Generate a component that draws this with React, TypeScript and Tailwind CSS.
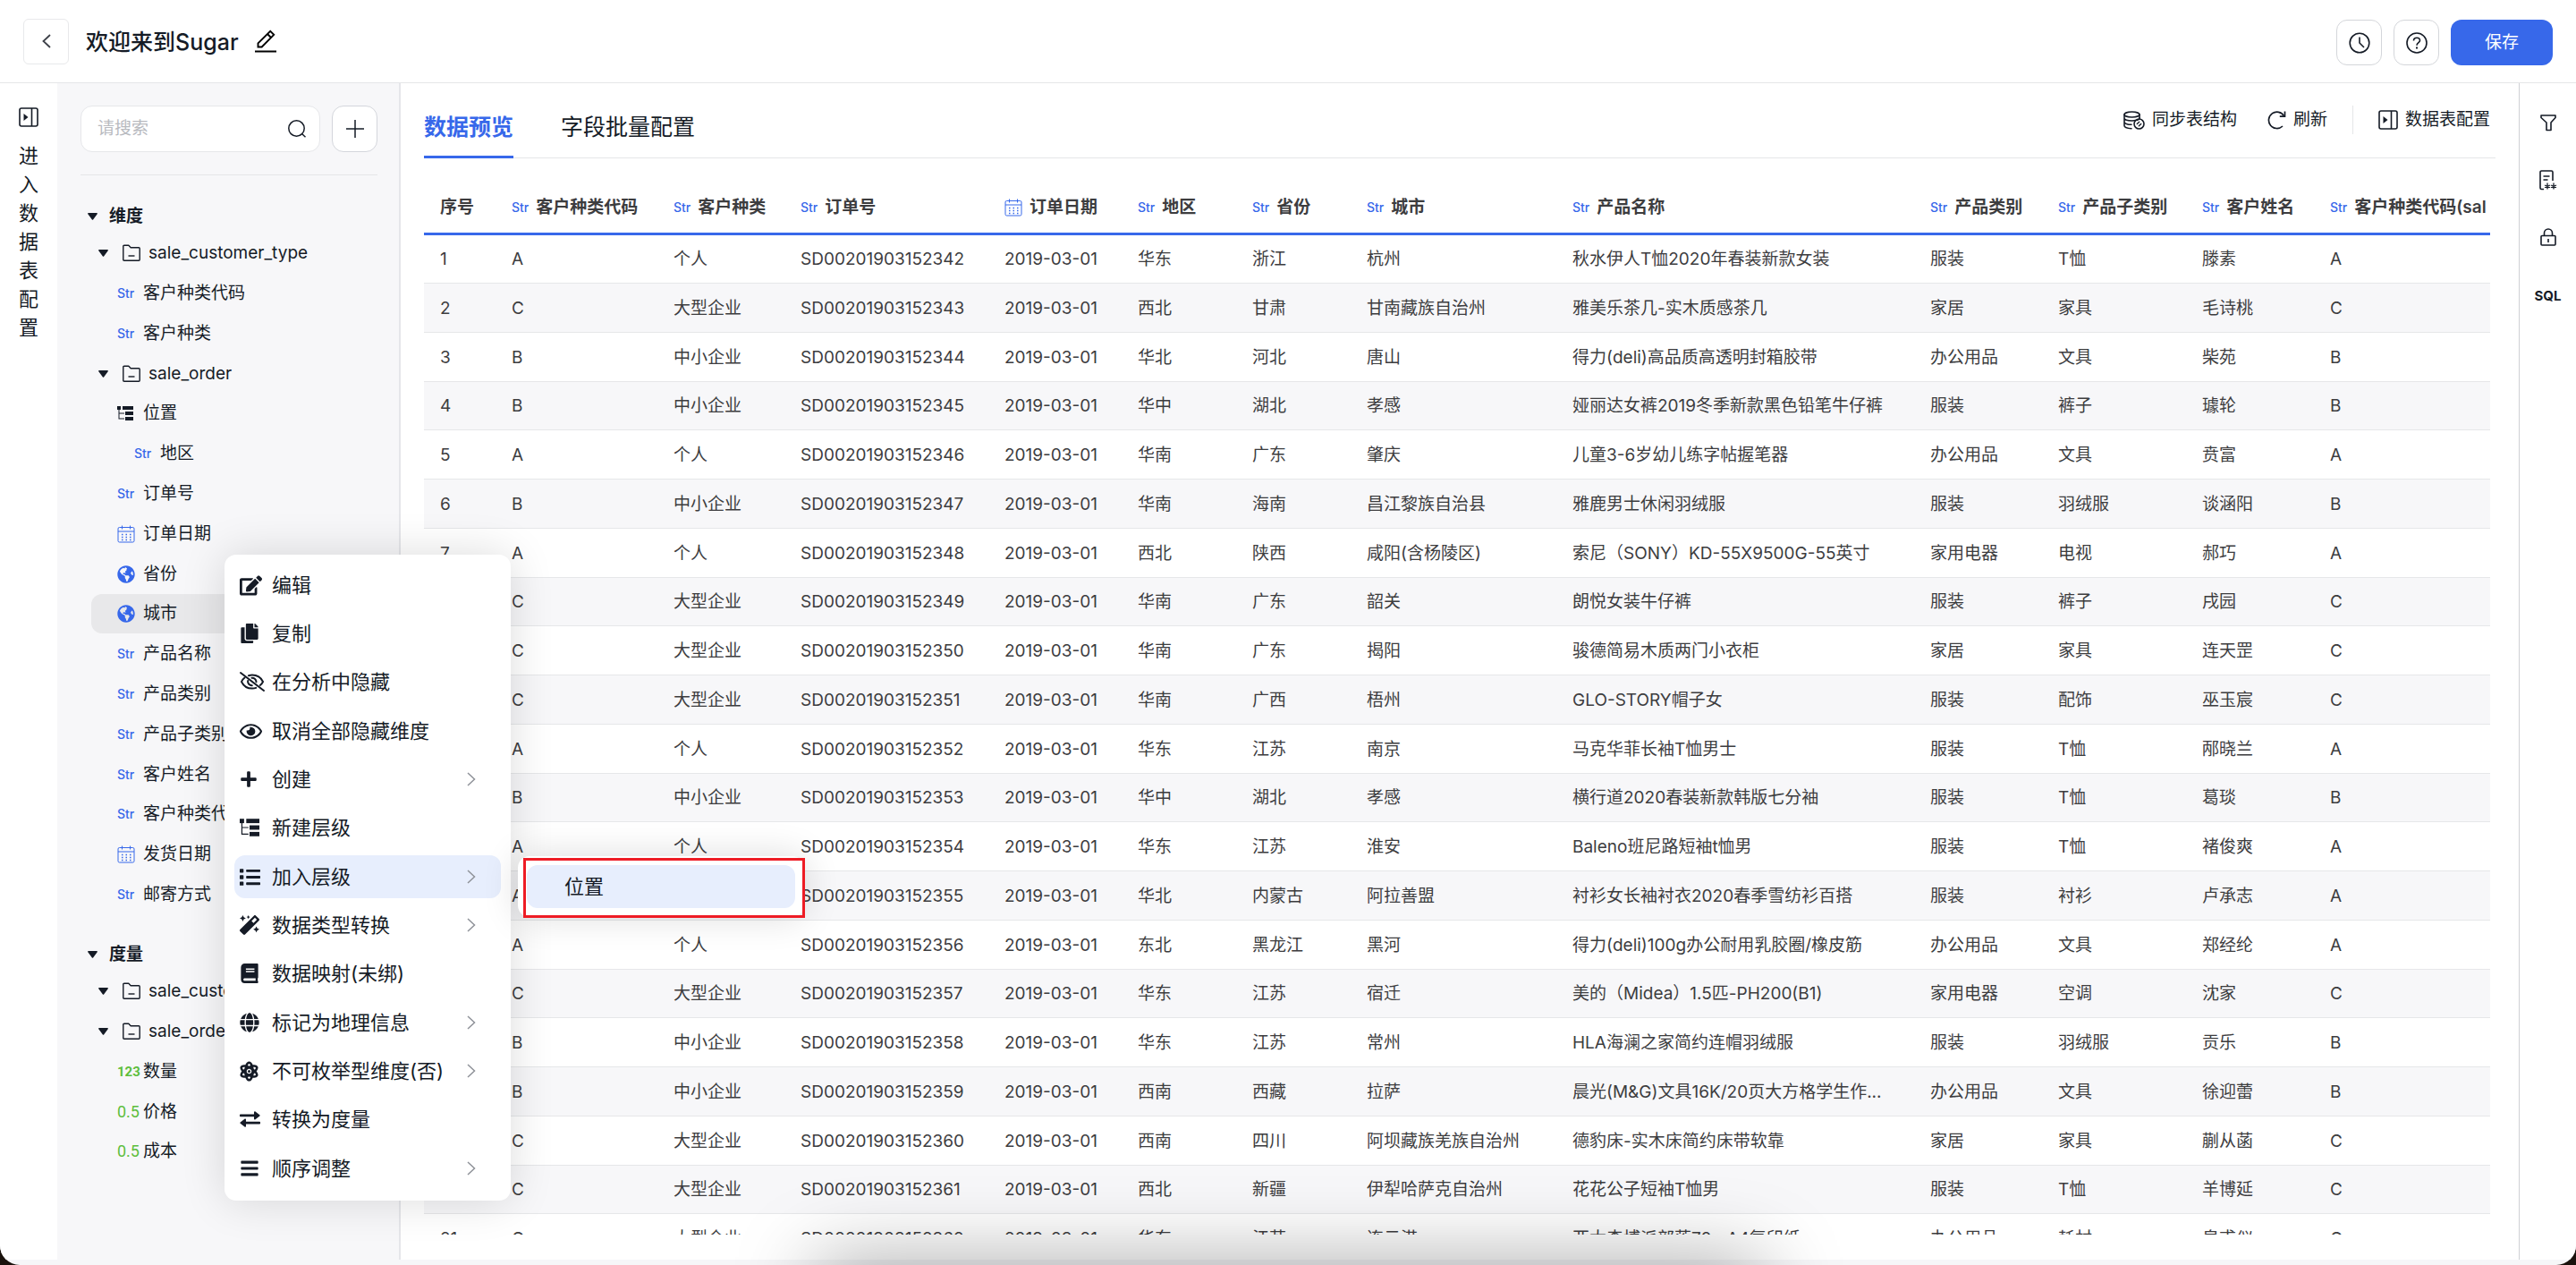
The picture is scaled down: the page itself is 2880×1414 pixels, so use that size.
import type { ReactNode } from 'react';
import {
  FaBars,
  FaBook,
  FaCopy,
  FaEdit,
  FaGlobe,
  FaGlobeAmericas,
  FaList,
  FaMagic,
  FaPlus,
  FaRegEye,
} from 'react-icons/fa';

type FieldType = 'str' | 'date' | 'geo' | 'level' | 'int' | 'float' | 'folder';

interface TreeNode {
  label: string;
  type: FieldType;
  nested?: boolean;
  active?: boolean;
}

const dimensions: TreeNode[] = [
  { label: 'sale_customer_type', type: 'folder' },
  { label: '客户种类代码', type: 'str' },
  { label: '客户种类', type: 'str' },
  { label: 'sale_order', type: 'folder' },
  { label: '位置', type: 'level' },
  { label: '地区', type: 'str', nested: true },
  { label: '订单号', type: 'str' },
  { label: '订单日期', type: 'date' },
  { label: '省份', type: 'geo' },
  { label: '城市', type: 'geo', active: true },
  { label: '产品名称', type: 'str' },
  { label: '产品类别', type: 'str' },
  { label: '产品子类别', type: 'str' },
  { label: '客户姓名', type: 'str' },
  { label: '客户种类代码', type: 'str' },
  { label: '发货日期', type: 'date' },
  { label: '邮寄方式', type: 'str' },
];

const measures: TreeNode[] = [
  { label: 'sale_customer_type', type: 'folder' },
  { label: 'sale_order', type: 'folder' },
  { label: '数量', type: 'int' },
  { label: '价格', type: 'float' },
  { label: '成本', type: 'float' },
];

const columns: { label: string; type?: FieldType; width: string }[] = [
  { label: '序号', width: 'w-20' },
  { label: '客户种类代码', type: 'str', width: 'w-[181px]' },
  { label: '客户种类', type: 'str', width: 'w-[142px]' },
  { label: '订单号', type: 'str', width: 'w-[228px]' },
  { label: '订单日期', type: 'date', width: 'w-[149px]' },
  { label: '地区', type: 'str', width: 'w-32' },
  { label: '省份', type: 'str', width: 'w-32' },
  { label: '城市', type: 'str', width: 'w-[230px]' },
  { label: '产品名称', type: 'str', width: 'w-[400px]' },
  { label: '产品类别', type: 'str', width: 'w-[143px]' },
  { label: '产品子类别', type: 'str', width: 'w-[161px]' },
  { label: '客户姓名', type: 'str', width: 'w-[143px]' },
  { label: '客户种类代码(sal', type: 'str', width: 'w-auto' },
];

const kinds: Record<string, string> = {
  A: '个人',
  B: '中小企业',
  C: '大型企业',
};

// kind, region, province, city, product, category, sub category, customer
const orders = [
  ['A', '华东', '浙江', '杭州', '秋水伊人T恤2020年春装新款女装', '服装', 'T恤', '滕素'],
  ['C', '西北', '甘肃', '甘南藏族自治州', '雅美乐茶几-实木质感茶几', '家居', '家具', '毛诗桃'],
  ['B', '华北', '河北', '唐山', '得力(deli)高品质高透明封箱胶带', '办公用品', '文具', '柴苑'],
  ['B', '华中', '湖北', '孝感', '娅丽达女裤2019冬季新款黑色铅笔牛仔裤', '服装', '裤子', '璩轮'],
  ['A', '华南', '广东', '肇庆', '儿童3-6岁幼儿练字帖握笔器', '办公用品', '文具', '贲富'],
  ['B', '华南', '海南', '昌江黎族自治县', '雅鹿男士休闲羽绒服', '服装', '羽绒服', '谈涵阳'],
  ['A', '西北', '陕西', '咸阳(含杨陵区)', '索尼（SONY）KD-55X9500G-55英寸', '家用电器', '电视', '郝巧'],
  ['C', '华南', '广东', '韶关', '朗悦女装牛仔裤', '服装', '裤子', '戌园'],
  ['C', '华南', '广东', '揭阳', '骏德简易木质两门小衣柜', '家居', '家具', '连天罡'],
  ['C', '华南', '广西', '梧州', 'GLO-STORY帽子女', '服装', '配饰', '巫玉宸'],
  ['A', '华东', '江苏', '南京', '马克华菲长袖T恤男士', '服装', 'T恤', '邴晓兰'],
  ['B', '华中', '湖北', '孝感', '横行道2020春装新款韩版七分袖', '服装', 'T恤', '葛琰'],
  ['A', '华东', '江苏', '淮安', 'Baleno班尼路短袖t恤男', '服装', 'T恤', '褚俊爽'],
  ['A', '华北', '内蒙古', '阿拉善盟', '衬衫女长袖衬衣2020春季雪纺衫百搭', '服装', '衬衫', '卢承志'],
  ['A', '东北', '黑龙江', '黑河', '得力(deli)100g办公耐用乳胶圈/橡皮筋', '办公用品', '文具', '郑经纶'],
  ['C', '华东', '江苏', '宿迁', '美的（Midea）1.5匹-PH200(B1)', '家用电器', '空调', '沈家'],
  ['B', '华东', '江苏', '常州', 'HLA海澜之家简约连帽羽绒服', '服装', '羽绒服', '贡乐'],
  ['B', '西南', '西藏', '拉萨', '晨光(M&G)文具16K/20页大方格学生作...', '办公用品', '文具', '徐迎蕾'],
  ['C', '西南', '四川', '阿坝藏族羌族自治州', '德豹床-实木床简约床带软靠', '家居', '家具', '蒯从菡'],
  ['C', '西北', '新疆', '伊犁哈萨克自治州', '花花公子短袖T恤男', '服装', 'T恤', '羊博延'],
  ['C', '华东', '江苏', '连云港', '亚太森博派部落70g A4复印纸', '办公用品', '耗材', '皇甫仪'],
];

const menuItems: {
  label: string;
  icon: ReactNode;
  sub?: boolean;
  active?: boolean;
}[] = [
  { label: '编辑', icon: <FaEdit size={25} /> },
  { label: '复制', icon: <FaCopy size={22} /> },
  { label: '在分析中隐藏', icon: <EyeOffIcon /> },
  { label: '取消全部隐藏维度', icon: <FaRegEye size={25} /> },
  { label: '创建', icon: <FaPlus size={20} />, sub: true },
  { label: '新建层级', icon: <LevelIcon size={22} /> },
  { label: '加入层级', icon: <FaList size={23} />, sub: true, active: true },
  { label: '数据类型转换', icon: <FaMagic size={22} />, sub: true },
  { label: '数据映射(未绑)', icon: <FaBook size={22} /> },
  { label: '标记为地理信息', icon: <FaGlobe size={22} />, sub: true },
  { label: '不可枚举型维度(否)', icon: <AtomIcon />, sub: true },
  { label: '转换为度量', icon: <SwapIcon /> },
  { label: '顺序调整', icon: <FaBars size={22} />, sub: true },
];

function EyeOffIcon() {
  return (
    <svg width="28" height="24" viewBox="0 0 28 24" fill="none" stroke="currentColor" strokeWidth="2" strokeLinecap="round">
      <path d="M1 2l26 20" />
      <path d="M5.500 7.500C3.800 8.800 2.600 10.400 2 12c2.200 4.600 6.800 7.600 12 7.600 1.500 0 2.900-.2 4.200-.7" />
      <path d="M10 5.200c1.300-.4 2.600-.6 4-.6 5.200 0 9.800 3 12 7.400-.7 1.500-1.800 2.900-3.200 4" />
      <path d="M9.200 11c-.5 3 1.800 5.300 4.600 5.200M13.500 7.800c2.800-.2 5 1.900 5 4.500" />
    </svg>
  );
}

function LevelIcon({ size = 18 }: { size?: number }) {
  return (
    <svg width={size} height={size} viewBox="0 0 18 18" fill="currentColor">
      <rect x="0" y="1" width="4" height="4" />
      <rect x="6" y="1" width="12" height="4" />
      <rect x="9" y="7" width="9" height="4" />
      <rect x="9" y="13" width="9" height="4" />
      <path d="M1.500 4v11.500H8V14.500H2.500V9.500H8V8.500H2.500V4z" />
    </svg>
  );
}

function AtomIcon() {
  return (
    <svg width="21" height="23" viewBox="0 0 21 23" fill="none" stroke="currentColor" strokeWidth="2.600">
      <ellipse cx="10.500" cy="11.500" rx="4" ry="9.800" />
      <ellipse cx="10.500" cy="11.500" rx="4" ry="9.800" transform="rotate(60 10.500 11.500)" />
      <ellipse cx="10.500" cy="11.500" rx="4" ry="9.800" transform="rotate(120 10.500 11.500)" />
      <circle cx="10.500" cy="11.500" r="1.500" fill="currentColor" stroke="none" />
    </svg>
  );
}

function SwapIcon() {
  return (
    <svg width="23" height="18" viewBox="0 0 23 18" fill="currentColor">
      <path d="M.8 3.500H16V1.300c0-1 .9-1.300 1.500-.8l4.800 3.700c.5.400.5 1 0 1.400l-4.800 3.600c-.6.500-1.500.1-1.500-.8V6.300H.8C.3 6.300 0 6 0 5.500V4.300c0-.5.300-.8.800-.8z" />
      <path d="M22.200 14.500H7v2.200c0 1-.9 1.300-1.500.8L.7 13.800c-.5-.4-.5-1 0-1.400l4.800-3.600c.6-.5 1.500-.1 1.500.8v2.100h15.200c.5 0 .8.300.8.800v1.200c0 .5-.3.800-.8.800z" />
    </svg>
  );
}

function CalendarIcon() {
  return (
    <svg width="20" height="20" viewBox="0 0 20 20" fill="none" stroke="currentColor" strokeWidth="1">
      <rect x="1" y="2.500" width="18" height="16.500" rx="1.500" />
      <path d="M1 7h18M5.500 0.500v4M14.500 0.500v4" />
      <path d="M5 10.500h10.500M5 13.500h10.500M5 16.500h10.500" strokeWidth="1.500" strokeDasharray="1.500 3" />
    </svg>
  );
}

function FolderIcon() {
  return (
    <svg width="20" height="20" viewBox="0 0 20 20" fill="none" stroke="currentColor" strokeWidth="1.400" strokeLinejoin="round">
      <path d="M.8 17.200V2.200c0-.6.4-1 1-1h5l2.400 2.600h9c.6 0 1 .4 1 1v12.400c0 .6-.4 1-1 1H1.800c-.6 0-1-.4-1-1z" />
      <path d="M6.500 13h7" />
    </svg>
  );
}

function PanelIcon() {
  return (
    <svg width="22" height="22" viewBox="0 0 22 22" fill="none" stroke="currentColor" strokeWidth="1.600">
      <rect x="1" y="1" width="20" height="20" rx="2" />
      <path d="M14.500 1v20" />
      <path d="M5.500 7l5 4-5 4z" fill="currentColor" stroke="none" />
    </svg>
  );
}

function PencilIcon() {
  return (
    <svg width="24" height="26" viewBox="0 0 24 26" fill="none" stroke="#000" strokeWidth="1.900">
      <path d="M0 24.500h24" strokeWidth="2" />
      <path d="M3.500 19.500v-4.200L17.200 1.800l4 4L7.700 19.500zM14 5l4 4" />
    </svg>
  );
}

function SyncTableIcon() {
  return (
    <svg width="24" height="21" viewBox="0 0 24 21" fill="none" stroke="currentColor" strokeWidth="1.600" strokeLinecap="round">
      <ellipse cx="9.500" cy="4" rx="8.500" ry="3" />
      <path d="M1 4v12.500c0 1.600 3.500 3 8 3.200M18 4v4M1 8c0 1.700 3.800 3 8.500 3 1.700 0 3-.1 4-.4M1 12.300c0 1.600 3.500 3 8 3" />
      <path d="M18 8c0 1-1.500 2-3 2.400" />
      <circle cx="17.500" cy="14.500" r="5.500" />
      <path d="M15.300 14.500l2.400-2.200M17.300 16.700l2.400-2.200" strokeWidth="1.400" />
    </svg>
  );
}

function RefreshIcon() {
  return (
    <svg width="21" height="22" viewBox="0 0 21 22" fill="none" stroke="currentColor" strokeWidth="1.700">
      <path d="M17 18A9.200 9.200 0 1 1 18.500 6.500" />
      <path d="M19.500 1.500v5.700h-5.700" />
    </svg>
  );
}

function TypeTag({ type }: { type: FieldType }) {
  switch (type) {
    case 'str':
      return <span className="text-sm font-medium text-[#3768ea]">Str</span>;
    case 'date':
      return <span className="text-[#3768ea]"><CalendarIcon /></span>;
    case 'geo':
      return <FaGlobeAmericas size={20} className="text-[#3768ea]" />;
    case 'level':
      return <LevelIcon />;
    case 'int':
      return <span className="font-[family-name:Roboto] text-[15px] font-bold text-[#5dbe3c]">123</span>;
    case 'float':
      return <span className="font-[family-name:Roboto] text-lg text-[#5dbe3c]">0.5</span>;
    default:
      return <FolderIcon />;
  }
}

function Caret() {
  return (
    <svg width="11" height="8" viewBox="0 0 11 8" fill="currentColor" className="shrink-0">
      <path d="M.8 0h9.400c.6 0 .9.700.5 1.200L6.100 7.500c-.3.400-.9.400-1.200 0L.3 1.200C-.1.700.200 0 .8 0z" />
    </svg>
  );
}

function TreeGroup({ title, nodes }: { title: string; nodes: TreeNode[] }) {
  return (
    <section className="pb-[26px]">
      <h3 className="flex h-[37px] items-center gap-[13px] pl-2 font-semibold">
        <Caret />
        {title}
      </h3>
      <ul className="pl-3">
        {nodes.map((node, i) => (
          <li
            key={i}
            className={`flex h-[45px] items-center whitespace-nowrap rounded-xl nth-[5n]:h-[44px] ${
              node.active ? 'bg-[#e8e8ea]' : ''
            } ${node.type === 'folder' ? 'pl-2' : node.nested ? 'pl-12' : 'pl-[29px]'}`}
          >
            {node.type === 'folder' && (
              <span className="w-[27px]">
                <Caret />
              </span>
            )}
            <span className="flex w-[29px] shrink-0 items-center">
              <TypeTag type={node.type} />
            </span>
            {node.label}
          </li>
        ))}
      </ul>
    </section>
  );
}

function Sidebar() {
  return (
    <aside className="w-96 shrink-0 overflow-hidden border-r-2 border-[#e5e6ea] bg-[#f7f7f9] px-6 pl-[26px] pt-[25px]">
      <div className="flex gap-[13px] border-b border-[#e5e6e8] pb-[25px]">
        <label className="flex h-[52px] min-w-0 flex-1 items-center rounded-[13px] border border-[#e6e7ea] bg-white pl-[18px] pr-[15px]">
          <input
            type="text"
            aria-label="请搜索"
            placeholder="请搜索"
            className="min-w-0 flex-1 bg-transparent outline-none placeholder:text-[#b8babf]"
          />
          <svg width="20" height="20" viewBox="0 0 20 20" fill="none" stroke="currentColor" strokeWidth="1.500">
            <circle cx="9.500" cy="9.500" r="8.700" />
            <path d="M15.800 15.800l3.700 3.500" />
          </svg>
        </label>
        <button aria-label="新建" className="flex h-[52px] w-[51px] items-center justify-center rounded-[13px] border border-[#d4d6dc] bg-white">
          <svg width="20" height="20" viewBox="0 0 20 20" stroke="currentColor" strokeWidth="1.500">
            <path d="M10 0v20M0 10h20" />
          </svg>
        </button>
      </div>
      <div className="pt-[27px]">
        <TreeGroup title="维度" nodes={dimensions} />
        <TreeGroup title="度量" nodes={measures} />
      </div>
    </aside>
  );
}

function PreviewTable() {
  return (
    <table className="w-full table-fixed border-collapse text-left text-[#3d3d3f]">
      <colgroup>
        {columns.map((col) => (
          <col key={col.label} className={col.width} />
        ))}
      </colgroup>
      <thead>
        <tr className="h-[60px] border-b-3 border-[#3768ea]">
          {columns.map((col) => (
            <th key={col.label} className="p-0 pl-[18px] pt-1 font-semibold">
              <div className="flex items-center gap-2 whitespace-nowrap">
                {col.type && <TypeTag type={col.type} />}
                {col.label}
              </div>
            </th>
          ))}
        </tr>
      </thead>
      <tbody>
        {orders.map(([kind, region, province, city, ...rest], i) => {
          const cells = [
            i + 1,
            kind,
            kinds[kind],
            `SD00201903152${342 + i}`,
            '2019-03-01',
            region,
            province,
            city,
            ...rest,
            kind,
          ];
          return (
            <tr key={i} className="h-[55px] border-b border-[#e6e7e9] even:bg-[#f7f7f9] nth-[4n]:h-[54px]">
              {cells.map((cell, j) => (
                <td key={j} className="whitespace-nowrap p-0 pl-[18px] pt-0.5">
                  {cell}
                </td>
              ))}
            </tr>
          );
        })}
      </tbody>
    </table>
  );
}

function ContextMenu() {
  return (
    <div className="absolute left-[251px] top-[620px] z-10 w-80 rounded-[13px] bg-white px-[11px] pb-1.5 pt-[10px] text-[22px] shadow-[0_0_50px_rgba(0,0,0,0.14)]">
      {menuItems.map((item) => (
        <button
          key={item.label}
          className={`mb-1.5 flex h-12 w-full items-center whitespace-nowrap rounded-xl pl-1.5 pr-7 text-left nth-[3n]:mb-[7px] ${
            item.active ? 'bg-[#e7eefd]' : ''
          }`}
        >
          <span className="flex w-9 shrink-0 items-center">{item.icon}</span>
          <span className="flex-1">{item.label}</span>
          {item.sub && (
            <svg width="10" height="16" viewBox="0 0 10 16" fill="none" stroke="#8f9299" strokeWidth="1.500">
              <path d="M1 1l7.500 7L1 15" />
            </svg>
          )}
        </button>
      ))}
    </div>
  );
}

function SubMenu() {
  return (
    <div className="absolute left-[579px] top-[957px] z-10 w-80 rounded-[13px] bg-white px-[10px] py-[10px] text-[22px] shadow-[0_0_40px_rgba(0,0,0,0.14)]">
      <button className="block h-12 w-full rounded-xl bg-[#e7eefd] pl-[42px] text-left">位置</button>
      <div className="absolute -bottom-px -right-px left-1.5 top-0.5 border-3 border-[#ee1c25]" />
    </div>
  );
}

export default function App() {
  return (
    <div className="h-screen bg-[#1a120d]">
      <div className="relative flex h-full flex-col overflow-hidden rounded-b-[22px] bg-[#f6f6f8] pb-1.5 font-[Inter,'Noto_Sans_CJK_SC',sans-serif] text-[19px] leading-7 text-[#151b26]">
        <header className="flex h-[93px] shrink-0 items-center border-b border-[#e5e6e8] bg-white px-[26px]">
          <button aria-label="返回" className="mr-[19px] flex size-[51px] items-center justify-center rounded-md border border-[#e8e9eb]">
            <svg width="10" height="16" viewBox="0 0 10 16" fill="none" stroke="#3d4048" strokeWidth="1.800">
              <path d="M9 1L1.500 8 9 15" />
            </svg>
          </button>
          <h1 className="pt-0.5 text-[25px] font-medium">欢迎来到Sugar</h1>
          <button aria-label="重命名" className="ml-[18px]">
            <PencilIcon />
          </button>
          <div className="ml-auto flex gap-[13px] pt-[3px]">
            <button aria-label="历史" className="flex size-[51px] items-center justify-center rounded-xl border border-[#d4d6da]">
              <svg width="24" height="24" viewBox="0 0 24 24" fill="none" stroke="currentColor" strokeWidth="1.600">
                <circle cx="12" cy="12" r="10.800" />
                <path d="M12 5.500V12l5 5" />
              </svg>
            </button>
            <button aria-label="帮助" className="flex size-[51px] items-center justify-center rounded-xl border border-[#d4d6da]">
              <svg width="24" height="24" viewBox="0 0 24 24" fill="none" stroke="currentColor" strokeWidth="1.600">
                <circle cx="12" cy="12" r="11" />
                <path d="M8.500 9.500c0-2 1.500-3.300 3.500-3.300s3.500 1.300 3.500 3.100c0 2.300-3.500 2.500-3.500 5.500" />
                <path d="M12 16.500v2" strokeWidth="2" />
              </svg>
            </button>
            <button className="h-[51px] w-[114px] rounded-xl bg-[#3768ea] text-white">保存</button>
          </div>
        </header>

        <div className="flex min-h-0 flex-1 bg-white">
          <button className="flex w-16 shrink-0 flex-col items-center pt-[27px] text-[22px] leading-8">
            <PanelIcon />
            <span className="mt-4 w-[22px] whitespace-normal break-all">进入数据表配置</span>
          </button>

          <Sidebar />

          <main className="flex min-w-0 flex-1 flex-col px-[26px]">
            <div className="flex h-[84px] shrink-0 justify-between border-b border-[#e5e6e8]">
              <nav className="-mb-px flex gap-[53px] text-[25px]">
                <button className="border-b-3 border-[#3768ea] pt-4 font-semibold text-[#3768ea]">
                  数据预览
                </button>
                <button className="border-b-3 border-transparent pt-4">字段批量配置</button>
              </nav>
              <div className="mt-[25px] flex h-8 items-center pr-[6px]">
                <button className="flex items-center gap-2">
                  <SyncTableIcon />
                  同步表结构
                </button>
                <button className="ml-[34px] flex items-center gap-2">
                  <RefreshIcon />
                  刷新
                </button>
                <span className="mx-7 h-8 w-px bg-[#e5e6e8]" />
                <button className="flex items-center gap-2">
                  <PanelIcon />
                  数据表配置
                </button>
              </div>
            </div>
            <div className="mb-7 mr-[6px] min-h-0 flex-1 overflow-hidden pt-6">
              <PreviewTable />
            </div>
          </main>

          <aside className="flex w-16 shrink-0 flex-col items-center border-l border-[#cfd1d5] pt-8">
            <button aria-label="筛选" className="flex h-6 items-center">
              <svg width="18" height="19" viewBox="0 0 18 19" fill="none" stroke="currentColor" strokeWidth="1.600" strokeLinejoin="round">
                <path d="M1 1h16v2.500L12 9v8.500H7V9L1 3.500z" />
              </svg>
            </button>
            <button aria-label="脱敏" className="mt-10 flex h-6 items-center">
              <svg width="20" height="23" viewBox="0 0 20 23" fill="none" stroke="currentColor" strokeWidth="1.600">
                <path d="M5 21.500H2.500c-.8 0-1.500-.6-1.500-1.500V2.500C1 1.600 1.600 1 2.500 1h11c.9 0 1.500.6 1.500 1.500V12" />
                <path d="M4.500 7h7M4.500 11h5" />
                <path d="M9 14.500v7M6 17l6 2.500M12 17l-6 2.500M16 14.500v7M13 17l6 2.500M19 17l-6 2.500" strokeWidth="1.300" />
              </svg>
            </button>
            <button aria-label="权限" className="mt-10 flex h-6 items-center">
              <svg width="18" height="20" viewBox="0 0 18 20" fill="none" stroke="currentColor" strokeWidth="1.600">
                <rect x="1" y="8.500" width="16" height="10.500" rx="1" />
                <path d="M4.500 8.500V5.500a4.500 4.500 0 0 1 9 0v3M9 12v4" />
              </svg>
            </button>
            <button className="mt-[42px] h-6 text-[15px] leading-6 font-bold">SQL</button>
          </aside>
        </div>

        <ContextMenu />
        <SubMenu />
        <div className="pointer-events-none absolute left-[31.7%] right-[31.6%] top-full h-16 shadow-[0_0_90px_rgba(0,0,0,0.4)]" />
      </div>
    </div>
  );
}
